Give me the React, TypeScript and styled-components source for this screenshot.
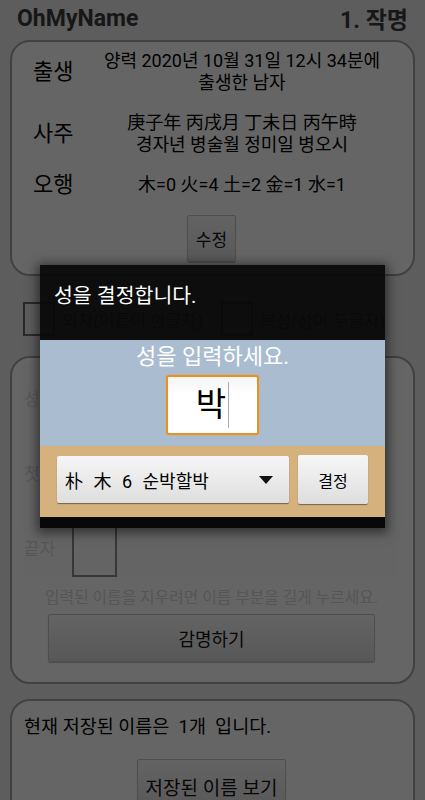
import styled, { createGlobalStyle } from "styled-components";

const GlobalStyle = createGlobalStyle`
  body {
    margin: 0;
    background: #e8e8e8;
    font-family: Roboto, "Noto Sans CJK KR", sans-serif;
  }
`;

const Screen = styled.div`
  position: relative;
  width: 425px;
  height: 800px;
  overflow: hidden;
  background: #e8e8e8;
  color: #000;
`;

const TopBar = styled.header`
  display: flex;
  justify-content: space-between;
  align-items: center;
  height: 36px;
  padding: 0 17px;
  font-size: 23px;
  font-weight: 700;
  color: #3a3a3a;
`;

const Card = styled.section<{ $top?: number }>`
  margin: ${({ $top }) => $top ?? 0}px 10px 0;
  background: #fdfdfd;
  border: 2px solid #a4a4a4;
  border-radius: 20px;
  padding: 8px 14px 12px 12px;
  display: flex;
  flex-direction: column;
`;

const InfoGrid = styled.div`
  display: grid;
  grid-template-columns: 52px 1fr;
  row-gap: 18px;
  padding-left: 9px;
  align-items: center;
`;

const InfoLabel = styled.div`
  font-size: 22px;
  line-height: 22px;
`;

const InfoValue = styled.div`
  font-size: 18px;
  line-height: 22px;
  text-align: center;
  white-space: nowrap;
`;

const Gray = styled.button<{ $w?: string; $h: number; $size: number }>`
  width: ${({ $w }) => $w ?? "auto"};
  height: ${({ $h }) => $h}px;
  padding: 0 8px;
  font-family: inherit;
  font-size: ${({ $size }) => $size}px;
  color: #111;
  background: linear-gradient(#f8f8f8, #dcdcdc);
  border: 1px solid #c4c4c4;
  border-radius: 2px;
  box-shadow: 0 1px 1px rgba(0, 0, 0, 0.25);
  align-self: center;
`;

const CheckRow = styled.div`
  display: flex;
  align-items: center;
  height: 80px;
  box-sizing: border-box;
  padding: 6px 0 0 23px;
  gap: 18px;
`;

const CheckItem = styled.label`
  display: flex;
  align-items: center;
  gap: 7px;
  font-size: 17px;
  color: #333;
`;

const Box = styled.span`
  width: 28px;
  height: 30px;
  border: 2px solid #6a6a6a;
`;

const NamePanel = styled.div`
  display: flex;
  flex-direction: column;
  gap: 17px;
  padding: 2px 0 0;
  margin-right: 2px;
  background: #fafafa;
`;

const NameRow = styled.div`
  display: flex;
  align-items: center;
  height: 58px;
`;

const NameLabel = styled.span`
  width: 48px;
  font-size: 17px;
  color: #d8d8d8;
`;

const NameBox = styled.span`
  width: 41px;
  height: 56px;
  border: 2px solid #8a8a8a;
`;

const Hint = styled.p`
  margin: 9px 0 6px;
  text-align: center;
  font-size: 15.8px;
  color: #d6d6d6;
  white-space: nowrap;
`;

const SavedText = styled.p`
  margin: 3px 0 21px;
  font-size: 18.5px;
`;

const Dim = styled.div`
  position: absolute;
  inset: 0;
  background: rgba(0, 0, 0, 0.6);
`;

const Dialog = styled.div`
  position: absolute;
  left: 40px;
  top: 265px;
  width: 345px;
  display: flex;
  flex-direction: column;
  box-shadow: 0 2px 10px 3px rgba(0, 0, 0, 0.5);
`;

const DialogTitle = styled.div`
  height: 75px;
  box-sizing: border-box;
  padding: 14px 14px 0;
  font-size: 20.5px;
  color: #fff;
  background: rgba(8, 8, 8, 0.94);
`;

const Prompt = styled.div`
  height: 106px;
  background: #aabdd0;
  display: flex;
  flex-direction: column;
  align-items: center;
  color: #fff;
  font-size: 22px;
  line-height: 30px;
  padding-top: 2px;
  box-sizing: border-box;
  gap: 3px;
`;

const SurnameInput = styled.div`
  width: 93px;
  height: 60px;
  box-sizing: border-box;
  border: 2px solid #e8902a;
  border-radius: 3px;
  background: linear-gradient(#f4f4f4, #ffffff 30%);
  box-shadow: 0 0 2px #f0a040;
  display: flex;
  justify-content: center;
  align-items: center;
  gap: 2px;
  font-size: 33px;
  line-height: 40px;
  color: #000;
`;

const Caret = styled.span`
  width: 1px;
  height: 46px;
  background: #aaa;
`;

const Actions = styled.div`
  height: 71px;
  background: #d5b17e;
  display: flex;
  align-items: center;
  padding: 0 17px 4px;
  box-sizing: border-box;
  gap: 9px;
`;

const Spinner = styled.div`
  flex: 1;
  height: 47px;
  box-sizing: border-box;
  display: flex;
  align-items: center;
  justify-content: space-between;
  padding: 0 16px 0 8px;
  font-size: 18px;
  word-spacing: 6px;
  background: linear-gradient(#f6f6f6, #dedede);
  border-radius: 2px;
  box-shadow: 0 1px 1px rgba(0, 0, 0, 0.45);
`;

const Arrow = styled.span`
  width: 0;
  height: 0;
  border-left: 7px solid transparent;
  border-right: 7px solid transparent;
  border-top: 8px solid #111;
`;

const DecideButton = styled.div`
  width: 70px;
  height: 49px;
  display: flex;
  align-items: center;
  justify-content: center;
  font-size: 16px;
  background: linear-gradient(#f6f6f6, #dedede);
  border-radius: 2px;
  box-shadow: 0 1px 1px rgba(0, 0, 0, 0.45);
`;

const DialogFoot = styled.div`
  height: 11px;
  background: #080808;
`;

export default function App() {
  return (
    <Screen>
      <GlobalStyle />
      <TopBar>
        <span>OhMyName</span>
        <span>1. 작명</span>
      </TopBar>

      <Card $top={4}>
        <InfoGrid>
          <InfoLabel>출생</InfoLabel>
          <InfoValue>
            양력 2020년 10월 31일 12시 34분에
            <br />
            출생한 남자
          </InfoValue>
          <InfoLabel>사주</InfoLabel>
          <InfoValue>
            庚子年 丙戌月 丁未日 丙午時
            <br />
            경자년 병술월 정미일 병오시
          </InfoValue>
          <InfoLabel>오행</InfoLabel>
          <InfoValue>木=0 火=4 土=2 金=1 水=1</InfoValue>
        </InfoGrid>
        <Gray $h={47} $size={17} style={{ marginTop: 19 }}>
          수정
        </Gray>
      </Card>

      <CheckRow>
        <CheckItem>
          <Box />
          외자(이름이 한글자)
        </CheckItem>
        <CheckItem>
          <Box />
          복성(성이 두글자)
        </CheckItem>
      </CheckRow>

      <Card>
        <NamePanel>
          {["성", "첫자", "끝자"].map((label) => (
            <NameRow key={label}>
              <NameLabel>{label}</NameLabel>
              <NameBox />
            </NameRow>
          ))}
        </NamePanel>
        <Hint>입력된 이름을 지우려면 이름 부분을 길게 누르세요.</Hint>
        <Gray $w="327px" $h={48} $size={18}>
          감명하기
        </Gray>
        <div style={{ height: 8 }} />
      </Card>

      <Card $top={15}>
        <SavedText>현재 저장된 이름은&nbsp; 1개&nbsp; 입니다.</SavedText>
        <Gray $h={54} $size={19}>
          저장된 이름 보기
        </Gray>
      </Card>

      <Dim />

      <Dialog>
        <DialogTitle>성을 결정합니다.</DialogTitle>
        <Prompt>
          성을 입력하세요.
          <SurnameInput>
            박<Caret />
          </SurnameInput>
        </Prompt>
        <Actions>
          <Spinner>
            <span>朴 木 6 순박할박</span>
            <Arrow />
          </Spinner>
          <DecideButton>결정</DecideButton>
        </Actions>
        <DialogFoot />
      </Dialog>
    </Screen>
  );
}
